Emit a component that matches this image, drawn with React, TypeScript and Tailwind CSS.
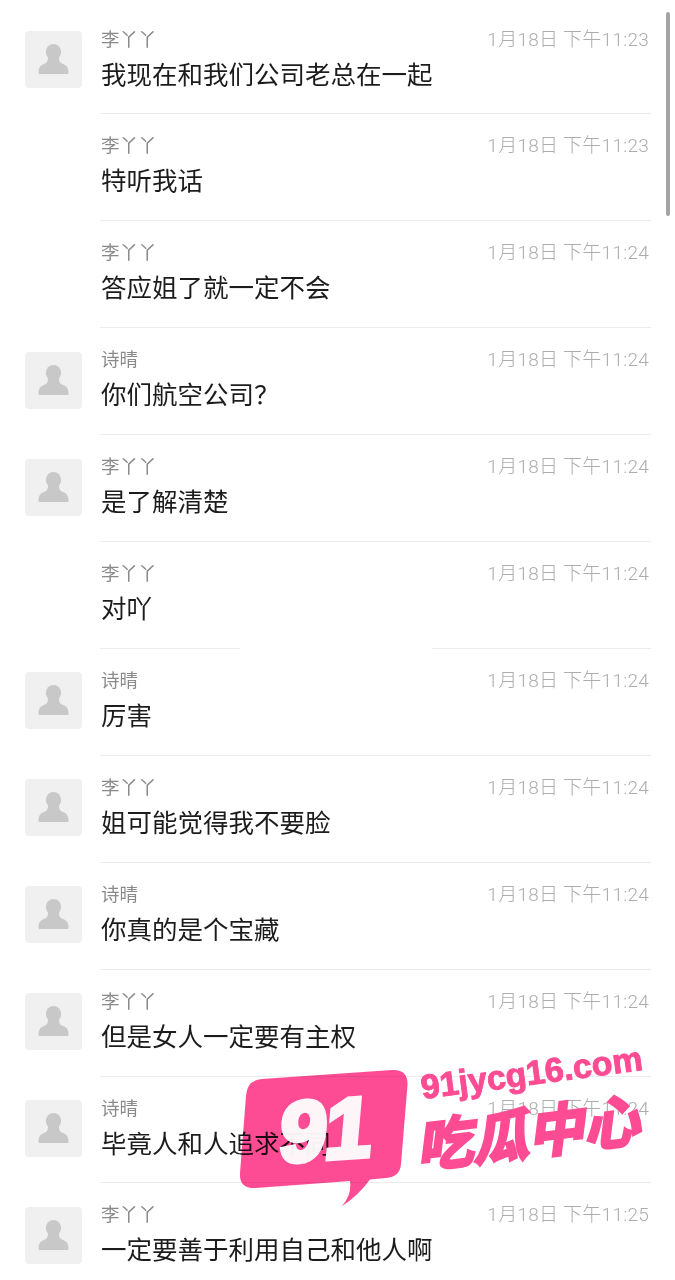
import React from "react";

const LI = "李丫丫";
const SHI = "诗晴";

interface Message {
  name: string;
  text: string;
  time: string;
  avatar?: boolean;
  splitRule?: boolean;
}

const messages: Message[] = [
  { name: LI, text: "我现在和我们公司老总在一起", time: "11:23", avatar: true },
  { name: LI, text: "特听我话", time: "11:23" },
  { name: LI, text: "答应姐了就一定不会", time: "11:24" },
  { name: SHI, text: "你们航空公司？", time: "11:24", avatar: true },
  { name: LI, text: "是了解清楚", time: "11:24", avatar: true },
  { name: LI, text: "对吖", time: "11:24", splitRule: true },
  { name: SHI, text: "厉害", time: "11:24", avatar: true },
  { name: LI, text: "姐可能觉得我不要脸", time: "11:24", avatar: true },
  { name: SHI, text: "你真的是个宝藏", time: "11:24", avatar: true },
  { name: LI, text: "但是女人一定要有主权", time: "11:24", avatar: true },
  { name: SHI, text: "毕竟人和人追求不同", time: "11:24", avatar: true },
  { name: LI, text: "一定要善于利用自己和他人啊", time: "11:25", avatar: true },
];

const Avatar = () => (
  <div className="h-[57px] w-[57px] rounded-[4px] bg-[#f0f0f0]">
    <svg viewBox="0 0 57 57" className="h-[57px] w-[57px]" fill="#c8c8c8">
      <ellipse cx="28.5" cy="21" rx="7.6" ry="8" />
      <path d="M23 26h11c0 4 1 6 4 7c3 1 5.5 3 5.5 8.500c0 1-.5 1.500-1.500 1.500h-27c-1 0-1.500-.5-1.500-1.500c0-5.500 2.500-7.500 5.500-8.500c3-1 4-3 4-7z" />
    </svg>
  </div>
);

const Row = ({ name, text, time, avatar, splitRule }: Message) => (
  <div className="flex h-[106.9px] shrink-0">
    <div className="w-[100px] shrink-0 pl-[25px] pt-[23.5px]">{avatar && <Avatar />}</div>
    <div className="relative w-[551px] border-b border-[#ececec] pl-px pt-[19px]">
      <div className="flex items-center justify-between pr-[2px]">
        <span className="text-[18.5px] leading-[26px] text-[#8a8a8a]">{name}</span>
        <span className="text-[19px] leading-[26px] font-light tracking-[0.25px] text-[#adadad] [font-family:'Roboto','Noto_Sans_CJK_SC',sans-serif]">
          1月18日 下午{time}
        </span>
      </div>
      <div className="mt-[4px] text-[25.5px] leading-[36px] text-[#1c1c1c]">{text}</div>
      {splitRule && <div className="absolute bottom-[-1px] left-[140px] h-[2px] w-[192px] bg-white" />}
    </div>
  </div>
);

// Site stamp in the lower right corner: pink speech bubble plus slanted wordmark
const Stamp = () => (
  <div className="absolute left-[236px] top-[1050px] flex">
    <div className="relative mt-[16px] flex h-[144px] w-[176px] items-start justify-center">
      <svg viewBox="236 1066 176 144" className="absolute inset-0 h-[144px] w-[176px] mix-blend-multiply">
        <path
          d="M262 1079L392 1070Q408 1069 407.500 1085L401 1164Q400 1177 386 1178L370 1179.500Q358 1196 342 1206Q352 1195 350 1181L256 1188Q239 1189 240 1173L246 1096Q247 1080 262 1079Z"
          fill="#fd4c93"
        />
      </svg>
      <span className="relative mt-[14px] ml-[2px] -rotate-[4deg] -skew-x-[9deg] text-[85px] leading-[100px] font-bold tracking-[-2px] text-white opacity-95 [-webkit-text-stroke:5px_#fff] [font-family:'Liberation_Sans',sans-serif]">
        91
      </span>
    </div>
    <div className="ml-[8px] flex w-[232px] flex-col">
      <span className="mt-[2px] -rotate-[7.5deg] text-[34px] leading-[40px] font-bold whitespace-nowrap text-[#fd4c93] [-webkit-text-stroke:1px_#fd4c93] [font-family:'Liberation_Sans',sans-serif]">
        91jycg16.com
      </span>
      <span className="mt-[9px] -rotate-[7deg] -skew-x-[14deg] text-[56px] leading-[66px] font-bold whitespace-nowrap text-[#fd4c93] [-webkit-text-stroke:3px_#fd4c93]">
        吃瓜中心
      </span>
    </div>
  </div>
);

export default function App() {
  return (
    <div className="relative flex h-[1280px] w-[675px] flex-col overflow-hidden bg-white pt-[7.6px] [font-family:'Liberation_Sans','Noto_Sans_CJK_SC',sans-serif]">
      {messages.map((m, i) => (
        <Row key={i} {...m} />
      ))}
      <div className="absolute left-[666px] top-[12px] h-[204px] w-[4px] rounded-full bg-[#a4a4a4]" />
      <Stamp />
    </div>
  );
}
